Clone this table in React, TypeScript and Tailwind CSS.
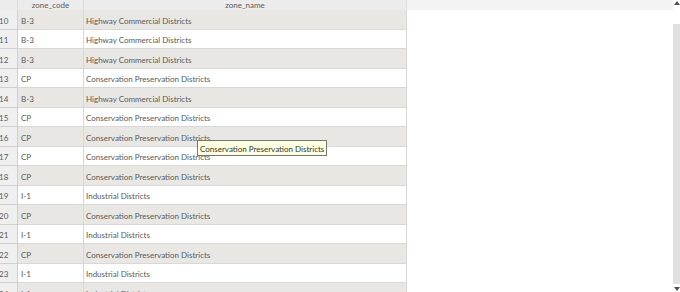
import React from 'react';

const rows = [
  { n: 10, code: 'B-3', name: 'Highway Commercial Districts' },
  { n: 11, code: 'B-3', name: 'Highway Commercial Districts' },
  { n: 12, code: 'B-3', name: 'Highway Commercial Districts' },
  { n: 13, code: 'CP', name: 'Conservation Preservation Districts' },
  { n: 14, code: 'B-3', name: 'Highway Commercial Districts' },
  { n: 15, code: 'CP', name: 'Conservation Preservation Districts' },
  { n: 16, code: 'CP', name: 'Conservation Preservation Districts' },
  { n: 17, code: 'CP', name: 'Conservation Preservation Districts' },
  { n: 18, code: 'CP', name: 'Conservation Preservation Districts' },
  { n: 19, code: 'I-1', name: 'Industrial Districts' },
  { n: 20, code: 'CP', name: 'Conservation Preservation Districts' },
  { n: 21, code: 'I-1', name: 'Industrial Districts' },
  { n: 22, code: 'CP', name: 'Conservation Preservation Districts' },
  { n: 23, code: 'I-1', name: 'Industrial Districts' },
  { n: 24, code: 'I-1', name: 'Industrial Districts' },
];

export default function App() {
  return (
    <div className="relative flex w-[680px] h-[292px] overflow-hidden bg-white text-[8px] text-[#5a5a5a] font-['Lato',sans-serif]">
      {/* Table area */}
      <div className="flex-1 flex flex-col overflow-hidden">
        {/* Header */}
        <div className="flex h-[10px] shrink-0 bg-[#f3f3f3]">
          <div className="w-[18px] shrink-0 bg-[#ececec] border-r border-[#dcdcdc]" />
          <div className="w-[66px] shrink-0 bg-[#ececec] border-r border-[#dcdcdc] text-center leading-[10px]">zone_code</div>
          <div className="w-[323px] shrink-0 bg-[#ececec] border-r border-[#dcdcdc] text-center leading-[10px]">zone_name</div>
          <div className="flex-1" />
        </div>

        {/* Body */}
        <div className="flex flex-col">
          {rows.map((r, i) => (
            <div key={r.n} className={`flex shrink-0 ${i % 2 === 0 ? 'h-[20px]' : 'h-[19px]'}`}>
              <div className="w-[18px] shrink-0 bg-[#efefef] border-r border-b border-[#cfcfcf] flex items-center pt-[2px] overflow-hidden">
                <span className="-ml-[1px]">{r.n}</span>
              </div>
              <div className={`w-[389px] shrink-0 flex border-b border-r border-[#d8d8d8] ${i % 2 === 0 ? 'bg-[#e8e7e3]' : 'bg-white'}`}>
                <div className="w-[66px] shrink-0 flex items-center pt-[2px] pl-[3px] border-r border-[#d8d8d8]">{r.code}</div>
                <div className="flex-1 flex items-center pt-[2px] pl-[2px]">{r.name}</div>
              </div>
            </div>
          ))}
        </div>
      </div>

      {/* Scrollbar */}
      <div className="w-[7px] shrink-0 flex flex-col bg-white">
        <div className="h-[9px] flex items-start justify-center pt-[1px]">
          <svg width="6" height="5" viewBox="0 0 6 5"><path d="M3 0 L6 4 L0 4 Z" fill="#505050" /></svg>
        </div>
        <div className="h-[15px]" />
        <div className="h-[260px] bg-[#e0e0e0]" />
        <div className="flex-1 flex items-end justify-center pb-[1px]">
          <svg width="6" height="5" viewBox="0 0 6 5"><path d="M0 1 L6 1 L3 5 Z" fill="#505050" /></svg>
        </div>
      </div>

      {/* Tooltip */}
      <div className="absolute left-[197px] top-[140px] h-[16px] px-[2px] pt-[1px] flex items-center bg-[#ffffe1] border border-[#767676] text-[#333] whitespace-nowrap">
        Conservation Preservation Districts
      </div>
    </div>
  );
}
